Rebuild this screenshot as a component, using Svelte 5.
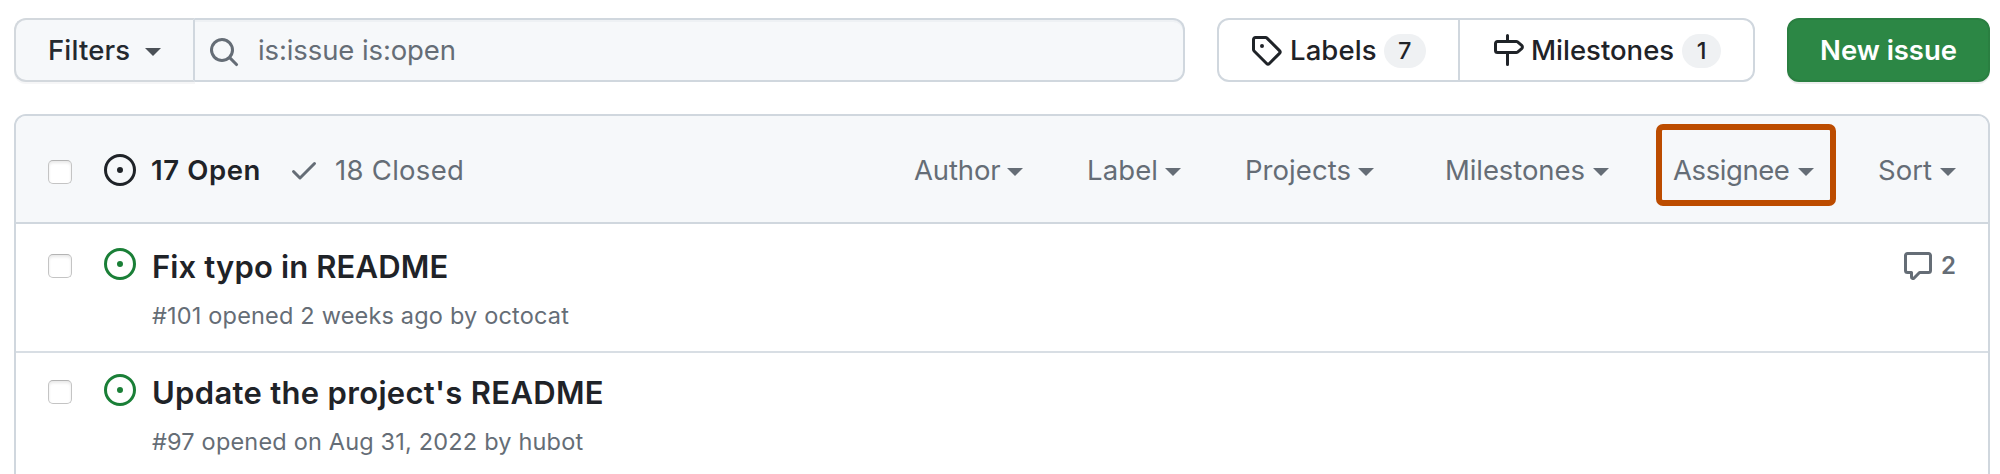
<script>
  const caretPath = 'M0 0h16l-8 8z';
  const icons = {
    open: 'M8 9.5a1.5 1.5 0 100-3 1.5 1.5 0 000 3zM8 0a8 8 0 100 16A8 8 0 008 0zM1.5 8a6.5 6.5 0 1113 0 6.5 6.5 0 01-13 0z',
    check: 'M13.78 4.22a.75.75 0 010 1.06l-7.25 7.25a.75.75 0 01-1.06 0L2.22 9.28a.75.75 0 011.06-1.06L6 10.94l6.72-6.72a.75.75 0 011.06 0z',
    search: 'M11.5 7a4.499 4.499 0 11-8.998 0A4.499 4.499 0 0111.5 7zm-.82 4.74a6 6 0 111.06-1.06l3.04 3.04a.75.75 0 11-1.06 1.06l-3.04-3.04z',
    tag: 'M2.5 7.775V2.75a.25.25 0 01.25-.25h5.025a.25.25 0 01.177.073l6.25 6.25a.25.25 0 010 .354l-5.025 5.025a.25.25 0 01-.354 0l-6.25-6.25a.25.25 0 01-.073-.177zm-1.5 0V2.75C1 1.784 1.784 1 2.75 1h5.025c.464 0 .91.184 1.238.513l6.25 6.25a1.75 1.75 0 010 2.474l-5.026 5.026a1.75 1.75 0 01-2.474 0l-6.25-6.25A1.75 1.75 0 011 7.775zM6 5a1 1 0 100 2 1 1 0 000-2z',
    milestone: 'M7.75 0a.75.75 0 01.75.75V3h3.634c.414 0 .814.147 1.13.414l2.07 1.75a1.75 1.75 0 010 2.672l-2.07 1.75a1.75 1.75 0 01-1.13.414H8.5v5.25a.75.75 0 11-1.5 0V10H2.75A1.75 1.75 0 011 8.25v-3.5C1 3.784 1.784 3 2.75 3H7V.75A.75.75 0 017.75 0zm0 8.5h4.384a.25.25 0 00.161-.06l2.07-1.75a.25.25 0 000-.38l-2.07-1.75a.25.25 0 00-.161-.06H2.75a.25.25 0 00-.25.25v3.5c0 .138.112.25.25.25h5z',
    comment: 'M2.75 2.5a.25.25 0 00-.25.25v7.5c0 .138.112.25.25.25h2a.75.75 0 01.75.75v2.19l2.72-2.72a.75.75 0 01.53-.22h4.5a.25.25 0 00.25-.25v-7.5a.25.25 0 00-.25-.25H2.75zM1 2.75C1 1.784 1.784 1 2.75 1h10.5c.966 0 1.75.784 1.75 1.75v7.5A1.75 1.75 0 0113.25 12H9.06l-2.573 2.573A1.457 1.457 0 014 13.543V12H2.75A1.75 1.75 0 011 10.25v-7.5z'
  };
  const menus = [
    { name: 'Author', width: 109, spacing: -0.15 },
    { name: 'Label', width: 94, spacing: 0.1 },
    { name: 'Projects', width: 129, spacing: 0.05 },
    { name: 'Milestones', width: 164, spacing: -0.08, wide: true },
    { name: 'Assignee', width: 141, spacing: -0.42, active: true },
    { name: 'Sort', width: 78, spacing: 0 }
  ];
  const issues = [
    { title: 'Fix typo in README', spacing: 0.14, meta: '#101 opened 2 weeks ago by octocat', comments: 2 },
    { title: "Update the project's README", spacing: 0.31, meta: '#97 opened on Aug 31, 2022 by hubot' }
  ];
</script>

{#snippet icon(name)}
  <svg class="icon" viewBox="0 0 16 16" width="32" height="32"><path fill-rule="evenodd" d={icons[name]} /></svg>
{/snippet}
{#snippet caret()}
  <svg class="caret" viewBox="0 0 16 8" width="16" height="8"><path d={caretPath} /></svg>
{/snippet}

<main>
  <div class="toolbar">
    <div class="search">
      <button class="filters"><span>Filters</span>{@render caret()}</button>
      <div class="query">{@render icon('search')}<span>is:issue is:open</span></div>
    </div>
    <nav>
      <a class="labels" href="#labels">{@render icon('tag')}<span>Labels</span><b>7</b></a>
      <a class="milestones" href="#milestones">{@render icon('milestone')}<span>Milestones</span><b>1</b></a>
    </nav>
    <button class="new">New issue</button>
  </div>
  <section>
    <header>
      <i class="box"></i>
      <div class="open">{@render icon('open')}<span>17 Open</span></div>
      <div class="closed">{@render icon('check')}<span>18 Closed</span></div>
      <div class="menus">
        {#each menus as m}
          <div class="menu" class:wide={m.wide} class:active={m.active} style:width="{m.width}px">
            <span style:letter-spacing="{m.spacing}px">{m.name}</span>{@render caret()}
          </div>
        {/each}
      </div>
    </header>
    {#each issues as issue}
      <article>
        <i class="box"></i>
        <div class="state">{@render icon('open')}</div>
        <div class="text">
          <h2 style:letter-spacing="{issue.spacing}px">{issue.title}</h2>
          <p>{issue.meta}</p>
        </div>
        {#if issue.comments}
          <div class="comments">{@render icon('comment')}<span>{issue.comments}</span></div>
        {/if}
      </article>
    {/each}
  </section>
</main>

<style>
  :global(body) { background: #fff; overflow: hidden; }
  main { width: 2000px; height: 474px; padding: 18px 10px 0 14px; overflow: hidden; font: 400 27.5px/40px Inter, sans-serif; color: #1f2328; }
  *, *::after { box-sizing: border-box; }
  span { white-space: nowrap; }
  .icon, .caret { display: block; flex: none; fill: currentColor; }
  button { font: inherit; margin: 0; }
  .toolbar { display: flex; height: 64px; }
  .search { display: flex; width: 1171px; margin-right: 32px; }
  .filters { display: flex; align-items: center; justify-content: space-between; width: 181px; padding: 0 32px 0 32px; border: 2px solid #d3d8dd; border-right-color: #d0d7de; border-radius: 12px 0 0 12px; background: #f6f8fa; color: #24292f; font-weight: 500; letter-spacing: .15px; box-shadow: 0 2px 0 rgba(31,35,40,.04); }
  .filters .caret { color: #4b5157; margin-top: 4px; }
  .query { flex: 1; display: flex; align-items: center; gap: 18px; padding-left: 13px; border: 2px solid #d0d7de; border-left: 0; border-radius: 0 12px 12px 0; background: #f6f8fa; box-shadow: inset 0 2px 0 rgba(208,215,222,.2); color: #656d76; letter-spacing: -.1px; }
  .query .icon { margin-top: 4px; }
  nav { display: flex; width: 538px; border: 2px solid #d0d7de; border-radius: 12px; font-weight: 500; }
  nav a { display: flex; align-items: center; color: inherit; text-decoration: none; }
  nav span { margin-left: 7px; }
  .labels { width: 241px; padding-left: 31px; border-right: 2px solid #d0d7de; }
  .labels span { margin-left: 8px; letter-spacing: .1px; }
  .milestones { padding-left: 32px; }
  nav b { margin: 2px 0 0 8px; height: 34px; min-width: 39px; padding: 0 12px; border-radius: 17px; background: #eff1f3; font: 500 23.5px/34px Inter, sans-serif; text-align: center; }
  .labels b { margin-left: 7px; min-width: 42px; }
  .new { width: 203px; margin-left: 32px; padding: 0; border: 2px solid #2a7f41; border-radius: 12px; background: #2c8745; color: #fff; font-weight: 560; letter-spacing: -.05px; box-shadow: 0 2px 0 rgba(31,35,40,.08); }
  section { height: 400px; margin-top: 32px; border: 2px solid #d0d7de; border-radius: 12px 12px 0 0; }
  header { display: flex; align-items: center; height: 108px; padding: 2px 32px 0; border-bottom: 2px solid #d0d7de; border-radius: 10px 10px 0 0; background: #f6f8fa; color: #656d76; }
  .box { flex: none; width: 24px; height: 24px; border: 1px solid #c4c4c4; border-top-color: #b4b4b4; border-radius: 5px; background: #fff; box-shadow: inset 0 2px 3px rgba(0,0,0,.09); }
  header .box { margin-top: 4px; }
  .open, .closed { display: flex; align-items: center; }
  .open { margin-left: 32px; gap: 15px; width: 152px; color: #1f2328; font-weight: 600; letter-spacing: .6px; }
  .closed { margin-left: 32px; gap: 15px; letter-spacing: .28px; }
  .menus { display: flex; margin-left: auto; gap: 64px; }
  .menu { display: flex; align-items: center; justify-content: space-between; }
  .menu .caret { margin-top: 4px; }
  .wide { margin-left: 7px; }
  .active { position: relative; }
  .active::after { content: ''; position: absolute; left: -17px; top: -26px; width: 180px; height: 82px; border: 6px solid #bc4c00; border-radius: 7px; }
  article { display: flex; align-items: flex-start; height: 129px; padding: 24px 32px 0; border-bottom: 2px solid #d8dee4; }
  article + article { padding-top: 21px; }
  article .box { margin-top: 6px; }
  .state { margin-left: 32px; color: #1a7f37; }
  .text { margin-left: 16px; }
  h2 { margin: -1px 0 0; font-size: 31px; font-weight: 600; line-height: 40px; white-space: nowrap; }
  p { margin: 9px 0 0; font-size: 23.5px; line-height: 40px; letter-spacing: .18px; color: #656d76; white-space: nowrap; }
  .comments { display: flex; align-items: center; gap: 7px; margin: 2px 0 0 auto; color: #656d76; font-size: 24px; font-weight: 600; line-height: 32px; }
</style>
